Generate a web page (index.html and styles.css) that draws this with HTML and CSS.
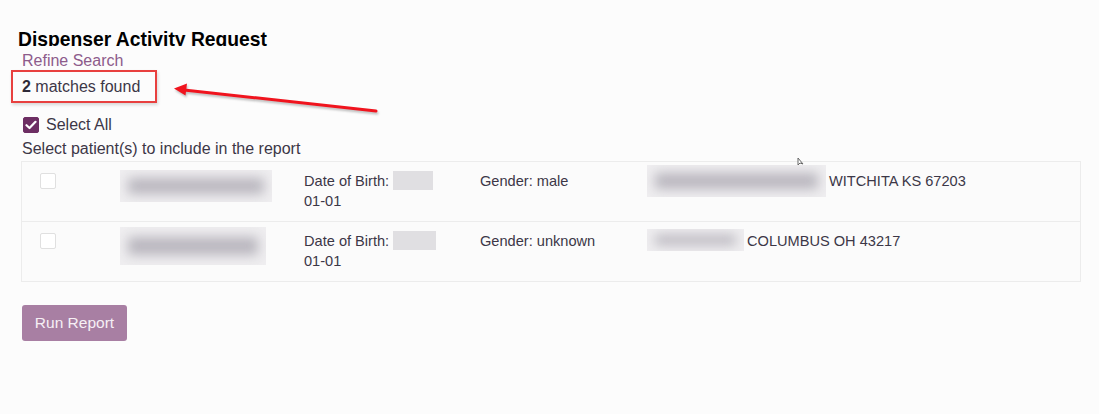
FILE: index.html
```html
<!DOCTYPE html>
<html lang="en">
<head>
    <meta charset="UTF-8">
    <meta name="viewport" content="width=device-width, initial-scale=1.0">
    <title>Dispenser Activity Request</title>
    <link rel="stylesheet" href="styles.css">
</head>
<body>

    <div class="page">
        <div class="title-wrap">
            <h1>Dispenser Activity Request</h1>
        </div>
        <a class="refine" href="#">Refine Search</a>
        <div class="matches"><b>2</b> matches found</div>

        <label class="select-all">
            <span class="check checked">
                <svg width="12" height="10" viewBox="0 0 12 10"><path d="M1.5 5.2 L4.5 8 L10.5 1.8" fill="none" stroke="#fff" stroke-width="2.2" stroke-linecap="round" stroke-linejoin="round"/></svg>
            </span>
            Select All
        </label>
        <div class="hint">Select patient(s) to include in the report</div>

        <div class="patients">
            <div class="patient">
                <span class="check"></span>
                <div class="blur name" style="width: 152px; height: 32px; margin-top: -1px;"></div>
                <div class="dob">Date of Birth: <span class="blur small"></span><br>01-01</div>
                <div>Gender: male</div>
                <div class="address">
                    <span class="blur" style="width: 179px; height: 32px; margin-top: -6px;"></span>
                    <span>WITCHITA KS 67203</span>
                </div>
            </div>
            <div class="patient">
                <span class="check"></span>
                <div class="blur name" style="width: 146px; height: 38px; margin-top: -4px;"></div>
                <div class="dob">Date of Birth: <span class="blur small" style="width: 43px;"></span><br>01-01</div>
                <div>Gender: unknown</div>
                <div class="address">
                    <span class="blur" style="width: 97px; height: 22px; margin-top: -2px;"></span>
                    <span>COLUMBUS OH 43217</span>
                </div>
            </div>
        </div>

        <button class="run">Run Report</button>

        <!-- annotation drawn over the screenshot -->
        <svg class="arrow" width="220" height="40" viewBox="0 0 220 40">
            <line x1="206" y1="29" x2="14" y2="8" stroke="#f0141e" stroke-width="3" stroke-linecap="round"/>
            <path d="M4 6.5 L17 1.5 L15.5 13.5 Z" fill="#f0141e"/>
        </svg>
        <svg class="cursor" width="8" height="10" viewBox="0 0 8 10">
            <path d="M1 1 L1 8 L3 6 L6 7 Z" fill="#fff" stroke="#666" stroke-width="1"/>
        </svg>
    </div>

</body>
</html>
```

FILE: styles.css
```css
body {
    margin: 0;
    background-color: #fcfcfc;
    font-family: "Liberation Sans", Arial, sans-serif;
    font-size: 16px;
    line-height: 20px;
    color: #3c3747;
}
.page {
    position: relative;
    padding: 0 18px 0 22px;
}
.title-wrap {
    height: 16px;
    overflow: hidden;
    margin: 30px 0 0 -4px;
}
h1 {
    margin: 0;
    font-size: 19.3px;
    line-height: 19px;
    font-weight: bold;
    color: #000;
}
.refine {
    display: block;
    margin-top: 5px;
    color: #8d5b8b;
    text-decoration: none;
}
.matches {
    box-sizing: border-box;
    width: 146px;
    height: 33px;
    margin: -1px 0 0 -11px;
    padding: 5px 0 0 9px;
    border: 2px solid #e8403f;
    box-shadow: 1px 2px 3px rgba(0,0,0,0.15);
}
.matches b {
    color: #2e2a38;
}
.select-all {
    display: flex;
    align-items: center;
    gap: 7px;
    margin: 12px 0 0 1px;
}
.check {
    display: inline-flex;
    align-items: center;
    justify-content: center;
    box-sizing: border-box;
    width: 16px;
    height: 16px;
    background: #fff;
    border: 1px solid #e0e0e0;
    border-radius: 2px;
}
.check.checked {
    background: #6d2e63;
    border-color: #6d2e63;
}
.hint {
    margin-top: 4px;
}
.patients {
    margin: 2px 0 0 -1px;
    border: 1px solid #ececec;
    background: #fbfbfb;
}
.patient {
    display: grid;
    grid-template-columns: 80px 184px 176px 167px 1fr;
    align-items: start;
    padding: 9px 0 10px 18px;
    font-size: 14.6px;
}
.patient + .patient {
    border-top: 1px solid #ececec;
}
.patient .check {
    margin-top: 2px;
}
.blur {
    display: inline-block;
    position: relative;
    overflow: hidden;
    background: #efeef0;
}
.blur::before {
    content: "";
    position: absolute;
    left: 8px;
    right: 8px;
    top: 26%;
    bottom: 26%;
    background: #b9b6be;
    filter: blur(6px);
}
.blur.small {
    width: 40px;
    height: 19px;
    vertical-align: -4px;
    background: #e0dfe2;
}
.blur.small::before {
    display: none;
}
.address {
    display: flex;
    align-items: flex-start;
    gap: 3px;
}
.run {
    margin-top: 23px;
    width: 105px;
    height: 36px;
    border: none;
    border-radius: 3px;
    background-color: #a87fa3;
    color: #f6f0f5;
    font-family: inherit;
    font-size: 15.5px;
    cursor: pointer;
}
.arrow {
    position: absolute;
    left: 170px;
    top: 52px;
    filter: drop-shadow(1px 2px 1px rgba(0,0,0,0.25));
}
.cursor {
    position: absolute;
    left: 797px;
    top: 127px;
}
```
